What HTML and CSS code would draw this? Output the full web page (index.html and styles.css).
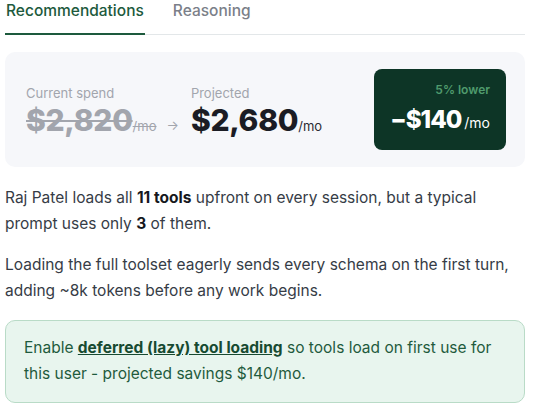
FILE: index.html
```html
<!DOCTYPE html>
<html>
<head>
<meta charset="utf-8">
<link rel="stylesheet" href="styles.css">
</head>
<body>
<div class="page">
  <div class="tabs">
    <div class="tab active">Recommendations</div>
    <div class="tab">Reasoning</div>
  </div>

  <div class="card">
    <div class="spend">
      <div class="col">
        <div class="label">Current spend</div>
        <div class="amount old"><span class="num">$2,820</span><span class="per">/mo</span></div>
      </div>
      <div class="arrow">→</div>
      <div class="col">
        <div class="label">Projected</div>
        <div class="amount"><span class="num">$2,680</span><span class="per">/mo</span></div>
      </div>
    </div>
    <div class="saving">
      <div class="pct">5% lower</div>
      <div class="delta">−$140<span class="per">/mo</span></div>
    </div>
  </div>

  <p class="text">Raj Patel loads all <b>11 tools</b> upfront on every session, but a typical prompt uses only <b>3</b> of them.</p>
  <p class="text">Loading the full toolset eagerly sends every schema on the first turn, adding ~8k tokens before any work begins.</p>

  <div class="rec">Enable <a class="rec-link">deferred (lazy) tool loading</a> so tools load on first use for this user - projected savings $140/mo.</div>
</div>
</body>
</html>
```

FILE: styles.css
```css
* { box-sizing: border-box; }
html, body { margin: 0; padding: 0; background: #ffffff; }
body { font-family: Inter, "Noto Sans", sans-serif; color: #353b46; }
.page { width: 520px; margin-left: 5px; }

.tabs {
  display: flex;
  gap: 27px;
  border-bottom: 1px solid #e3e7e9;
}
.tab {
  font-size: 15.5px;
  font-weight: 500;
  line-height: 21px;
  padding: 0 1px 12px;
  color: #7b7f89;
  border-bottom: 2px solid transparent;
  margin-bottom: -1px;
}
.tab.active { color: #1d5a3d; border-bottom-color: #1d5a3d; }

.card {
  margin-top: 17px;
  background: #f6f7fa;
  border-radius: 10px;
  padding: 17px 19px 17px 21px;
  display: flex;
  align-items: center;
  justify-content: space-between;
}
.spend { display: flex; align-items: flex-end; gap: 10px; padding-top: 8px; }
.col { display: flex; flex-direction: column; }
.label { font-size: 13px; color: #a2a5ad; line-height: 18px; }
.amount {
  font-size: 30px;
  font-weight: 800;
  color: #1b1c24;
  line-height: 36px;
  letter-spacing: -0.3px;
  white-space: nowrap;
}
.amount .per { font-size: 13px; font-weight: 400; color: #2a2c33; letter-spacing: 0; }
.amount.old .num { color: #a2a5ad; text-decoration: line-through; text-decoration-thickness: 2px; }
.amount.old .per { color: #a2a5ad; text-decoration: line-through; text-decoration-thickness: 1px; }
.arrow { font-size: 13px; color: #a2a5ad; line-height: 20px; padding-bottom: 9px; margin-right: 2px; }

.saving {
  height: 81px;
  background: #0d3526;
  border-radius: 8px;
  padding: 13px 16px 0 16px;
  display: flex;
  flex-direction: column;
  align-items: flex-end;
  white-space: nowrap;
}
.pct { font-size: 12px; font-weight: 600; color: #4f9b6d; line-height: 16px; margin-bottom: 6px; }
.delta { font-size: 24px; font-weight: 800; color: #ffffff; line-height: 32px; letter-spacing: -1px; }
.delta .per { font-size: 14px; font-weight: 400; margin-left: 3px; letter-spacing: 0; }

.text {
  font-size: 15.5px;
  line-height: 26px;
  margin: 18px 0 0;
  color: #363c46;
}
.text + .text { margin-top: 15px; }
.text b { font-weight: 700; color: #16181d; }

.rec {
  margin-top: 16px;
  background: #e8f5ee;
  border: 1px solid #b9dbc7;
  border-radius: 10px;
  padding: 14px 18px 15px;
  font-size: 15.5px;
  line-height: 26px;
  color: #1f5b3d;
}
.rec-link { font-weight: 700; color: #174a31; text-decoration: underline; }
```
